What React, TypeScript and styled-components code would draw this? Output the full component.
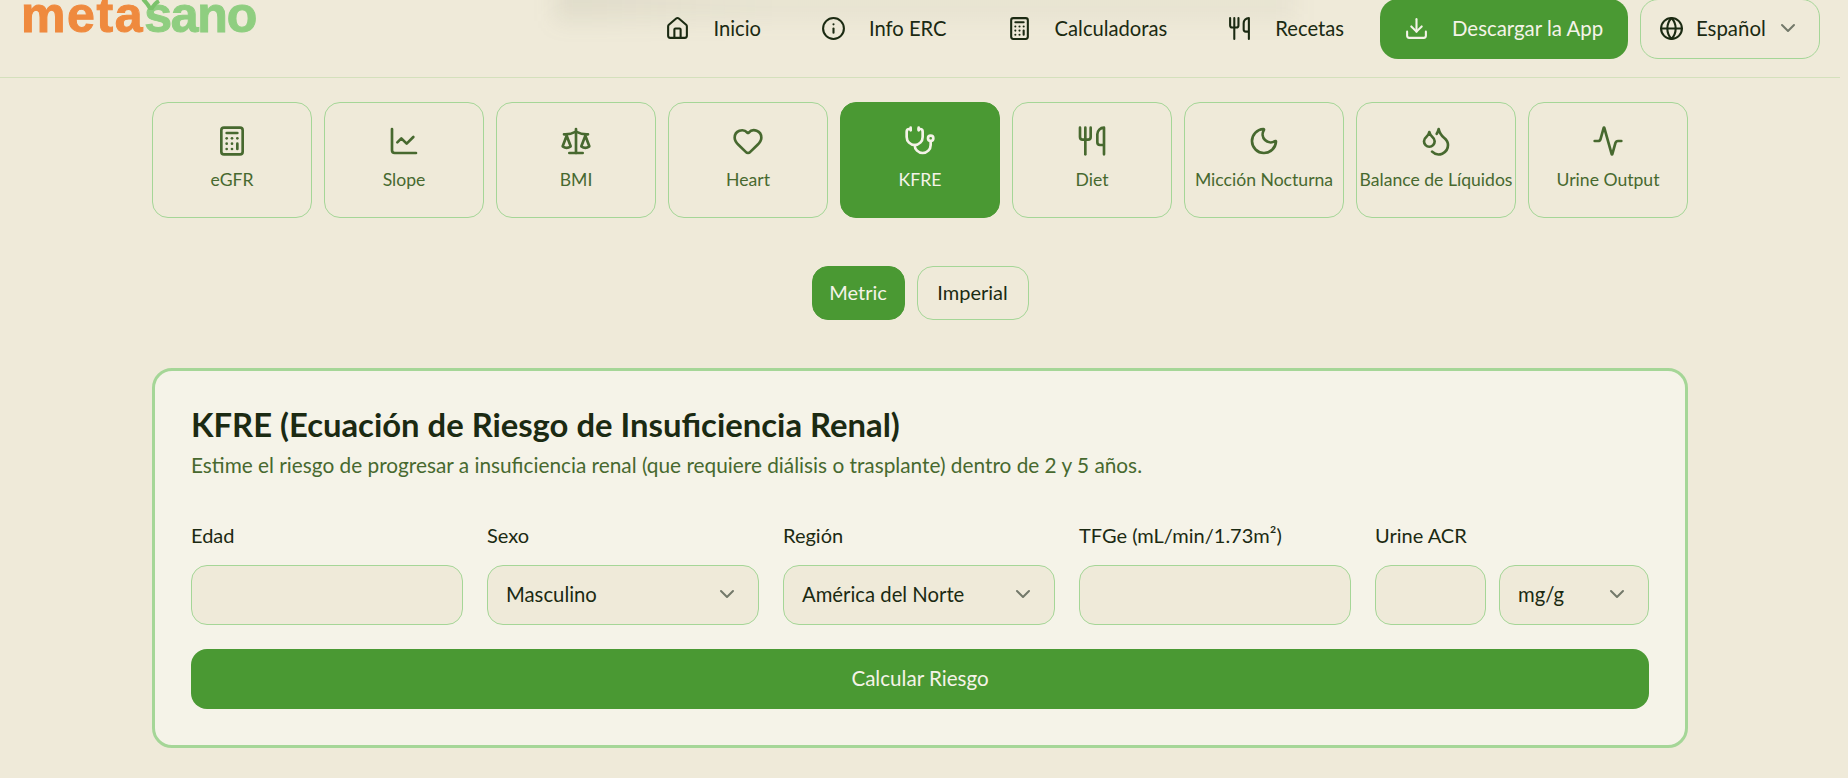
import React, {FC} from 'react';
import styled, {createGlobalStyle} from 'styled-components';
import {
    Activity, Calculator, ChartLine, ChevronDown, Download, Droplets, Globe, Heart, House, Info,
    LucideIcon, Moon, Scale, Stethoscope, Utensils,
} from 'lucide-react';

const Colors = {
    page: '#EFEAD9',
    panel: '#F5F3E8',
    green: '#4A9933',
    line: '#A5D697',
    dark: '#1B2A12',
    mid: '#47692F',
    chevron: '#73796A',
};

const GlobalStyle = createGlobalStyle`
  html, body {
    margin: 0;
    overflow: hidden;
    background: ${Colors.page};
    font-family: Lato, "Noto Sans", sans-serif;
    color: ${Colors.dark};
  }
`;

//region Header
const Page = styled.div`
  width: 1840px;
`;

const Header = styled.header`
  position: relative;
  display: flex;
  align-items: flex-start;
  justify-content: space-between;
  height: 97px;
  box-sizing: border-box;
  margin-top: -19px;
  padding: 18px 20px 0 21px;
  border-bottom: 1px solid #D4E0BC;
`;

const HeaderBlur = styled.div`
  position: absolute;
  top: 0;
  left: 555px;
  width: 740px;
  height: 40px;
  background: linear-gradient(90deg, rgba(110, 115, 85, 0.11), rgba(110, 115, 85, 0.05) 30%, rgba(110, 115, 85, 0.05));
  filter: blur(11px);
`;

const Logo = styled.div`
  position: relative;
  height: 32px;
  font-family: "Liberation Sans", sans-serif;
  font-weight: 700;
  font-size: 50px;
  line-height: 32px;
  letter-spacing: 1.6px;
  color: #EF8A3E;
  -webkit-text-stroke: 1px currentColor;
  filter: blur(0.4px);
`;

const LogoGreen = styled.span`
  letter-spacing: -1.2px;
  color: #8FCE80;
`;

const LogoLeaf = styled.svg`
  position: absolute;
  left: 120px;
  top: 0;
  width: 20px;
  height: 11px;
`;

const HeaderRight = styled.div`
  position: relative;
  display: flex;
  align-items: center;
  gap: 12px;
  height: 60px;
`;

const NavItem = styled.a`
  display: flex;
  align-items: center;
  gap: 23px;
  padding: 0 24px 2px;
  font-size: 20.2px;
  color: ${Colors.dark};
`;

const DownloadButton = styled.button`
  display: flex;
  align-items: center;
  gap: 23px;
  height: 60px;
  width: 248px;
  padding: 0 24px 2px;
  box-sizing: border-box;
  border: 0;
  border-radius: 18px;
  background: ${Colors.green};
  color: #F5F3E8;
  font: inherit;
  font-size: 20.4px;
  white-space: nowrap;
`;

const LangButton = styled.div`
  display: flex;
  align-items: center;
  justify-content: space-between;
  width: 180px;
  height: 60px;
  box-sizing: border-box;
  padding: 0 19px 2px 18px;
  border: 1px solid ${Colors.line};
  border-radius: 18px;
  font-size: 20.4px;
`;

const LangLabel = styled.span`
  display: flex;
  align-items: center;
  gap: 12px;
`;
//endregion

//region Tabs
const Main = styled.main`
  width: 1536px;
  margin: 24px auto 0;
`;

const Tabs = styled.nav`
  display: grid;
  grid-template-columns: repeat(9, 1fr);
  gap: 12px;
`;

const Tab = styled.div<{$active?: boolean}>`
  display: flex;
  flex-direction: column;
  align-items: center;
  gap: 11px;
  height: 116px;
  box-sizing: border-box;
  padding-top: 22px;
  border: 1px solid ${p => p.$active ? Colors.green : Colors.line};
  border-radius: 16px;
  background: ${p => p.$active ? Colors.green : 'transparent'};
  color: ${p => p.$active ? '#F5F3E8' : Colors.mid};
  font-size: 17.6px;
  line-height: 24px;
  white-space: nowrap;
`;

const Units = styled.div`
  display: flex;
  justify-content: center;
  gap: 12px;
  margin: 48px 0;
`;

const UnitButton = styled.button<{$active?: boolean, $width: number}>`
  width: ${p => p.$width}px;
  height: 54px;
  padding: 0 0 2px;
  border: 1px solid ${p => p.$active ? Colors.green : Colors.line};
  border-radius: 16px;
  background: ${p => p.$active ? Colors.green : 'transparent'};
  color: ${p => p.$active ? '#F5F3E8' : Colors.dark};
  font: inherit;
  font-size: 20px;
`;
//endregion

//region Form
const Card = styled.section`
  height: 380px;
  box-sizing: border-box;
  padding: 34px 36px;
  border: 3px solid ${Colors.line};
  border-radius: 20px;
  background: ${Colors.panel};
`;

const Title = styled.h2`
  margin: 0;
  font-size: 32.8px;
  line-height: 40px;
  font-weight: 700;
  color: ${Colors.dark};
`;

const Subtitle = styled.p`
  margin: 6px 0 0;
  font-size: 20.8px;
  line-height: 28px;
  color: ${Colors.mid};
`;

const Fields = styled.div`
  display: grid;
  grid-template-columns: repeat(4, 272px) 1fr;
  gap: 24px;
  margin-top: 42px;
`;

const Field = styled.div`
  display: flex;
  flex-direction: column;
  gap: 16px;
  min-width: 0;
`;

const Label = styled.label`
  font-size: 20px;
  line-height: 28px;
`;

const Input = styled.input`
  flex: 1;
  min-width: 0;
  width: 100%;
  height: 60px;
  box-sizing: border-box;
  border: 1px solid ${Colors.line};
  border-radius: 16px;
  background: ${Colors.page};
`;

const Select = styled.div<{$narrow?: boolean}>`
  display: flex;
  align-items: center;
  justify-content: space-between;
  flex: none;
  width: ${p => p.$narrow ? '150px' : '100%'};
  height: 60px;
  box-sizing: border-box;
  padding: 0 19px 2px 18px;
  border: 1px solid ${Colors.line};
  border-radius: 16px;
  background: ${Colors.page};
  font-size: 20.3px;
`;

const InputRow = styled.div`
  display: flex;
  gap: 13px;
`;

const Submit = styled.button`
  display: block;
  width: 100%;
  height: 60px;
  margin-top: 24px;
  padding: 0 0 2px;
  border: 0;
  border-radius: 16px;
  background: ${Colors.green};
  color: #F5F3E8;
  font: inherit;
  font-size: 20.6px;
`;
//endregion

const navItems: {icon: LucideIcon, label: string}[] = [
    {icon: House, label: 'Inicio'},
    {icon: Info, label: 'Info ERC'},
    {icon: Calculator, label: 'Calculadoras'},
    {icon: Utensils, label: 'Recetas'},
];

const tabs: {icon: LucideIcon, label: string, active?: boolean}[] = [
    {icon: Calculator, label: 'eGFR'},
    {icon: ChartLine, label: 'Slope'},
    {icon: Scale, label: 'BMI'},
    {icon: Heart, label: 'Heart'},
    {icon: Stethoscope, label: 'KFRE', active: true},
    {icon: Utensils, label: 'Diet'},
    {icon: Moon, label: 'Micción Nocturna'},
    {icon: Droplets, label: 'Balance de Líquidos'},
    {icon: Activity, label: 'Urine Output'},
];

const Chevron: FC = () => <ChevronDown size={24} color={Colors.chevron}/>;

const App: FC = () => (
    <Page>
        <GlobalStyle/>
        <Header>
            <HeaderBlur/>
            <Logo>
                meta<LogoGreen>sano</LogoGreen>
                <LogoLeaf viewBox="0 0 20 11">
                    <path d="M10 11C8 7 5 3 2 0M10 11c2-4 4-7 8-9" fill="none" stroke="#7BC26B" strokeWidth="4"/>
                </LogoLeaf>
            </Logo>
            <HeaderRight>
                {navItems.map(({icon: Icon, label}) => (
                    <NavItem key={label}><Icon size={25}/>{label}</NavItem>
                ))}
                <DownloadButton><Download size={25}/>Descargar la App</DownloadButton>
                <LangButton>
                    <LangLabel><Globe size={25}/>Español</LangLabel>
                    <Chevron/>
                </LangButton>
            </HeaderRight>
        </Header>
        <Main>
            <Tabs>
                {tabs.map(({icon: Icon, label, active}) => (
                    <Tab key={label} $active={active}><Icon size={32}/>{label}</Tab>
                ))}
            </Tabs>
            <Units>
                <UnitButton $active $width={93}>Metric</UnitButton>
                <UnitButton $width={112}>Imperial</UnitButton>
            </Units>
            <Card>
                <Title>KFRE (Ecuación de Riesgo de Insuficiencia Renal)</Title>
                <Subtitle>Estime el riesgo de progresar a insuficiencia renal (que requiere diálisis o trasplante) dentro de 2 y 5 años.</Subtitle>
                <Fields>
                    <Field><Label>Edad</Label><Input/></Field>
                    <Field><Label>Sexo</Label><Select>Masculino<Chevron/></Select></Field>
                    <Field><Label>Región</Label><Select>América del Norte<Chevron/></Select></Field>
                    <Field><Label>TFGe (mL/min/1.73m²)</Label><Input/></Field>
                    <Field>
                        <Label>Urine ACR</Label>
                        <InputRow><Input/><Select $narrow>mg/g<Chevron/></Select></InputRow>
                    </Field>
                </Fields>
                <Submit>Calcular Riesgo</Submit>
            </Card>
        </Main>
    </Page>
);

export default App;
